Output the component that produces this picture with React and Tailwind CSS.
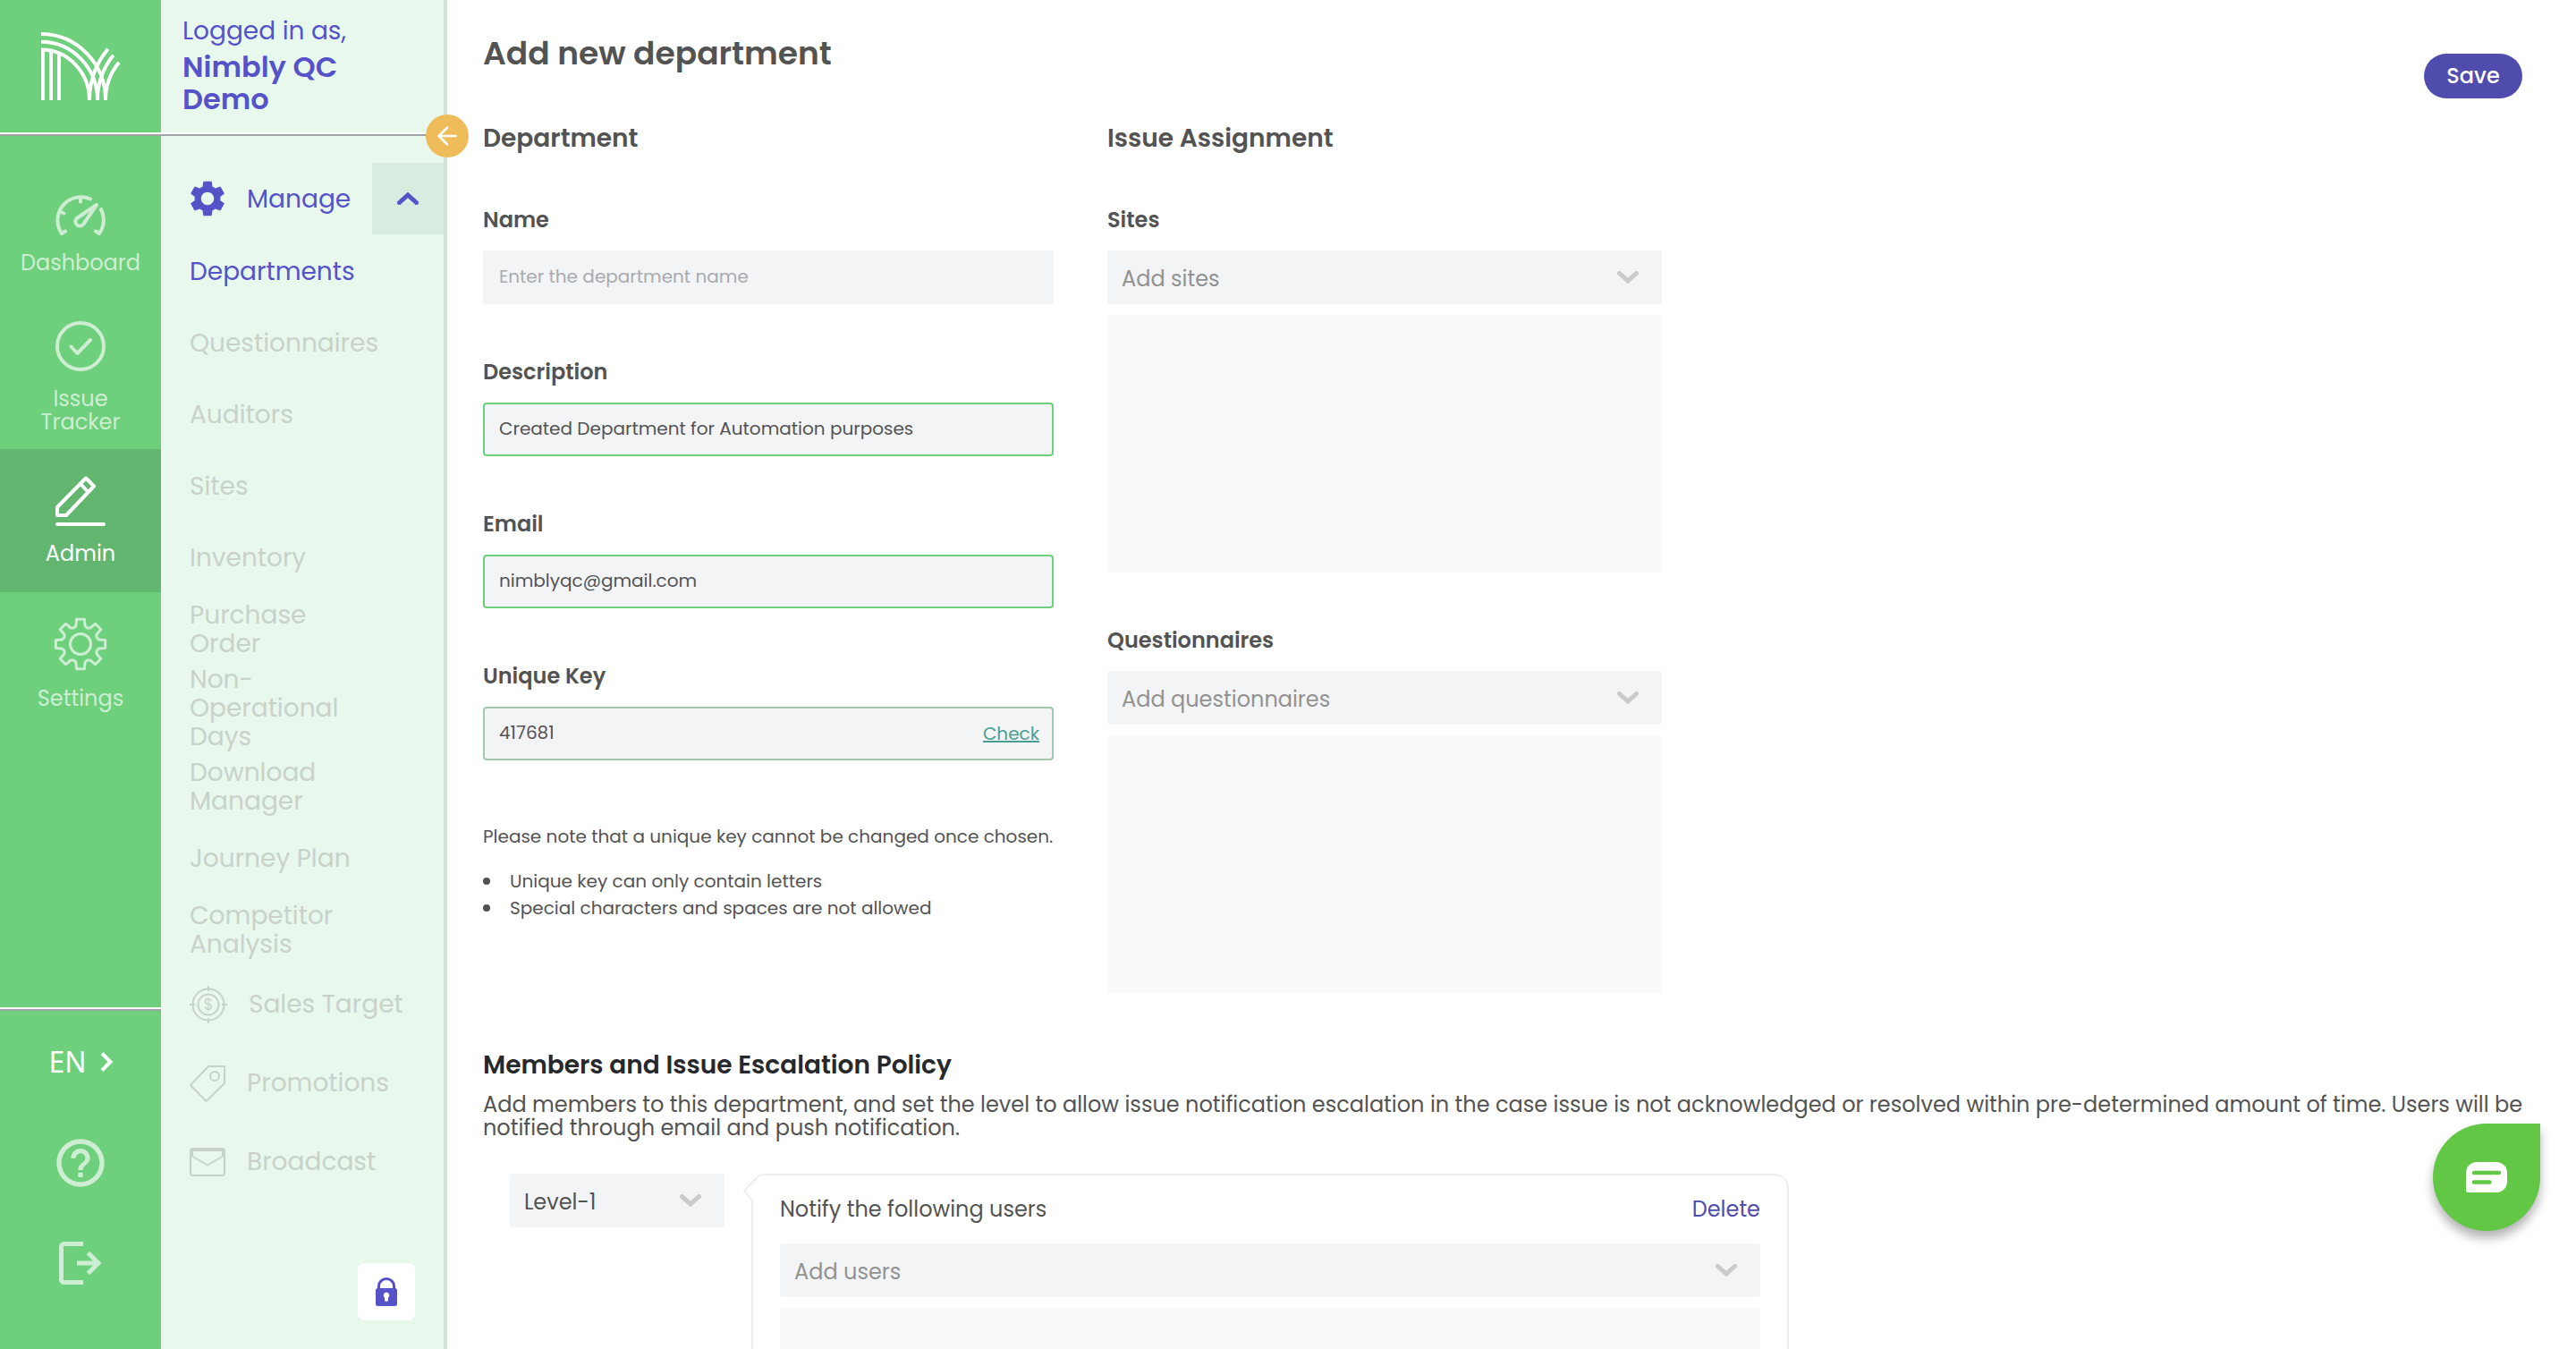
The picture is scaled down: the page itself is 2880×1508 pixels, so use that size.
import React from "react";
import { MdSettings, MdHelpOutline } from "react-icons/md";
import { ArrowLeft } from "lucide-react";

function Logo() {
  return (
    <svg width="88" height="76" viewBox="0 0 88 76" fill="none" stroke="#fff" strokeWidth="4" aria-label="Nimbly">
      <path d="M2 76V19M11 76V20M20 76V22" />
      <path d="M0 2A72 74 0 0 1 72 76M0 10.8A63 65.2 0 0 1 63 76M0 19.6A54 56.4 0 0 1 54 76" />
      <path d="M54 76A89.6 89.6 0 0 1 74.7 18.7M63 76A79.3 79.3 0 0 1 80.7 25.7M72 76A66 66 0 0 1 87 33.7" />
    </svg>
  );
}

function DashboardIcon() {
  return (
    <svg width="56" height="45" viewBox="0 0 56 45" fill="none" stroke="currentColor" strokeWidth="4" strokeLinecap="round" strokeLinejoin="round">
      <path d="M11 40.5L7 43A26 26 0 0 1 39 4.5M51 16A26 26 0 0 1 49 43L45 40.5M28 3V7.5M5 18.5L9.5 20.5" />
      <path d="M46 11L32 31.5A5 5 0 1 1 24.5 25.5Z" />
    </svg>
  );
}

function IssueIcon() {
  return (
    <svg width="56" height="56" viewBox="0 0 56 56" fill="none" stroke="currentColor" strokeWidth="4" strokeLinecap="round" strokeLinejoin="round">
      <circle cx="28" cy="28" r="26" />
      <path d="M17.5 28.5L24.5 36L39 21" />
    </svg>
  );
}

function PencilIcon() {
  return (
    <svg width="56" height="56" viewBox="0 0 56 56" fill="none" stroke="currentColor" strokeWidth="4" strokeLinejoin="round" strokeLinecap="round">
      <path d="M2 54H54M2 44V35L34 2.5L43 11.5L12 44ZM28 9L36.5 18" />
    </svg>
  );
}

const gearPath = (() => {
  const at = (deg, r) => {
    const a = (deg * Math.PI) / 180;
    return `${(30 + r * Math.cos(a)).toFixed(1)} ${(30 + r * Math.sin(a)).toFixed(1)}`;
  };
  const points = [];
  for (let i = 0; i < 8; i++) {
    const c = i * 45 - 90;
    points.push(at(c - 14, 21), at(c - 9, 28), at(c + 9, 28), at(c + 14, 21), at(c + 22.5, 19.5));
  }
  return `M${points.join("L")}Z`;
})();

function GearOutlineIcon() {
  return (
    <svg width="60" height="60" viewBox="0 0 60 60" fill="none" stroke="currentColor" strokeWidth="3" strokeLinejoin="round">
      <path d={gearPath} />
      <circle cx="30" cy="30" r="11.5" />
    </svg>
  );
}

function LogoutIcon() {
  return (
    <svg width="48" height="48" viewBox="0 0 48 48" fill="none" stroke="currentColor" strokeWidth="5">
      <path d="M27 2.5H5.5A3 3 0 0 0 2.5 5.5V42.5A3 3 0 0 0 5.5 45.5H27" />
      <path d="M20 24H42M32.5 12.5L44 24L32.5 35.5" />
    </svg>
  );
}

function TargetIcon() {
  return (
    <svg width="42" height="42" viewBox="0 0 42 42" fill="none" stroke="currentColor" strokeWidth="2">
      <circle cx="21" cy="21" r="17.5" />
      <circle cx="21" cy="21" r="11.5" />
      <path d="M21 0V6M21 36V42M0 21H6M36 21H42" />
      <text x="21" y="27" textAnchor="middle" fontSize="17" fill="currentColor" stroke="none" fontFamily="Poppins, Inter, sans-serif">$</text>
    </svg>
  );
}

function TagIcon() {
  return (
    <svg width="40" height="41" viewBox="0 0 40 41" fill="none" stroke="currentColor" strokeWidth="2" strokeLinejoin="round">
      <path d="M21 1H39V20L18.5 40L1 22Z" />
      <circle cx="28" cy="12" r="5" />
    </svg>
  );
}

function MailIcon() {
  return (
    <svg width="40" height="32" viewBox="0 0 40 32" fill="none" stroke="currentColor" strokeWidth="2" strokeLinejoin="round">
      <rect x="1" y="1" width="38" height="30" rx="3" />
      <path d="M3 9V3H37V9" />
      <path d="M2 9L20 19.5L38 9" />
    </svg>
  );
}

function LockIcon() {
  return (
    <svg width="24" height="32" viewBox="0 0 24 32">
      <path d="M3.5 14V9.5A8.5 8 0 0 1 20.5 9.5V14" fill="none" stroke="#5653c9" strokeWidth="3" />
      <rect y="12" width="24" height="20" rx="2.5" fill="#5653c9" />
      <path d="M12 16.5a3.5 3.5 0 0 1 2 6.2V25a2 2 0 0 1-4 0v-2.3a3.5 3.5 0 0 1 2-6.2z" fill="#fff" />
    </svg>
  );
}

function Chevron({ className }) {
  return (
    <svg className={className} width="24" height="14" viewBox="0 0 24 14" fill="none" stroke="currentColor" strokeWidth="5" strokeLinecap="round">
      <path d="M2.5 2.5L12 11L21.5 2.5" />
    </svg>
  );
}

const railItems = [
  { label: "Dashboard", icon: <DashboardIcon /> },
  { label: "Issue Tracker", icon: <IssueIcon /> },
  { label: "Admin", icon: <PencilIcon />, active: true },
  { label: "Settings", icon: <GearOutlineIcon /> },
];

const manageItems = [
  { label: "Departments", active: true },
  { label: "Questionnaires" },
  { label: "Auditors" },
  { label: "Sites" },
  { label: "Inventory" },
  { label: "Purchase Order" },
  { label: "Non-Operational Days" },
  { label: "Download Manager" },
  { label: "Journey Plan" },
  { label: "Competitor Analysis" },
];

const sectionItems = [
  { label: "Sales Target", icon: <TargetIcon /> },
  { label: "Promotions", icon: <TagIcon /> },
  { label: "Broadcast", icon: <MailIcon /> },
];

function Divider() {
  return <div className="h-1 shrink-0 border-b-2 border-[#9fa3a6] bg-white" />;
}

function Rail() {
  return (
    <nav className="flex w-[180px] shrink-0 flex-col bg-[#6ecf7c] text-2xl leading-[26px]">
      <a href="#home" className="flex h-[148px] shrink-0 items-center justify-center">
        <Logo />
      </a>
      <Divider />
      <div className="flex flex-col pt-[30px]">
        {railItems.map((item) => (
          <a
            key={item.label}
            href={`#${item.label}`}
            className={
              "flex h-40 flex-col items-center justify-center gap-[18px] px-5 text-center " +
              (item.active ? "bg-[#63b670] text-white" : "text-[#cdeed2]")
            }
          >
            {item.icon}
            <span>{item.label}</span>
          </a>
        ))}
      </div>
      <div className="mt-auto flex flex-col pb-10 text-[#cdeed2]">
        <Divider />
        <button type="button" className="flex h-[114px] items-center justify-center gap-[15px] font-['Noto_Sans',sans-serif] text-[32px] text-white">
          EN
          <svg width="14" height="22" viewBox="0 0 14 22" fill="none" stroke="currentColor" strokeWidth="4">
            <path d="M2 1.5L11.5 11L2 20.5" />
          </svg>
        </button>
        <button type="button" aria-label="Help" className="flex h-28 items-center justify-center">
          <MdHelpOutline size={64} />
        </button>
        <button type="button" aria-label="Log out" className="flex h-28 items-center justify-center">
          <LogoutIcon />
        </button>
      </div>
    </nav>
  );
}

function Sidebar() {
  return (
    <aside className="relative z-10 flex w-80 shrink-0 flex-col border-r-4 border-[#d3e3d8] bg-[#e8f8ed] text-[28px] leading-8 text-[#c8d2ca]">
      <div className="flex h-[148px] shrink-0 flex-col pt-[17px] pr-12 pl-6 text-[#5653c9]">
        <span className="leading-9">Logged in as,</span>
        <strong className="mt-1 text-[32px] leading-9 font-semibold">Nimbly QC Demo</strong>
      </div>
      <Divider />
      <button
        type="button"
        aria-label="Collapse sidebar"
        className="absolute top-32 -right-7 flex size-12 items-center justify-center rounded-full bg-[#eebc59] text-white"
      >
        <ArrowLeft size={32} />
      </button>
      <div className="mt-[30px] flex h-20 shrink-0 items-center justify-between pl-7 text-[#5653c9]">
        <a href="#manage" className="flex items-center gap-5">
          <MdSettings size={48} />
          <span className="pt-0.5">Manage</span>
        </a>
        <button type="button" aria-label="Collapse Manage" className="flex h-20 w-20 items-center justify-center bg-[#d8ecdf]">
          <Chevron className="rotate-180" />
        </button>
      </div>
      <ul className="pl-8">
        {manageItems.map((item) => (
          <li key={item.label} className="flex min-h-20 w-[212px] items-center">
            <a href={`#${item.label}`} className={item.active ? "pt-0.5 -mb-0.5 text-[#5653c9]" : "pt-0.5 -mb-0.5"}>
              {item.label}
            </a>
          </li>
        ))}
      </ul>
      <ul className="pl-8">
        {sectionItems.map((item) => (
          <li key={item.label} className="flex h-[88px] items-center">
            <a href={`#${item.label}`} className="flex items-center gap-6 pt-0.5">
              {item.icon}
              {item.label}
            </a>
          </li>
        ))}
      </ul>
      <button
        type="button"
        aria-label="Lock sidebar"
        className="mt-auto mr-8 mb-8 flex size-16 shrink-0 items-center justify-center self-end rounded-lg bg-white"
      >
        <LockIcon />
      </button>
    </aside>
  );
}

function TextField({ id, label, borderClass, action, ...inputProps }) {
  return (
    <div className="flex flex-col gap-[22px]">
      <label htmlFor={id} className="text-2xl leading-6 font-semibold">
        {label}
      </label>
      <div className={"flex h-[60px] items-center rounded border-2 bg-[#f3f4f6] pr-3.5 pl-4 text-xl " + borderClass}>
        <input
          id={id}
          className="h-full min-w-0 flex-1 bg-transparent pb-0.5 outline-none placeholder:text-[#a9aaaf]"
          {...inputProps}
        />
        {action}
      </div>
    </div>
  );
}

function SelectBox({ id, placeholder, muted = true, ...rest }) {
  return (
    <div className="relative flex h-[60px] items-center rounded bg-[#f3f4f6]">
      <select
        id={id}
        className={
          "h-full w-full appearance-none bg-transparent px-4 pt-1 text-2xl outline-none " +
          (muted ? "text-[#929292]" : "text-[#535353]")
        }
        {...rest}
      >
        <option>{placeholder}</option>
      </select>
      <Chevron className="pointer-events-none absolute right-[26px] text-[#cacaca]" />
    </div>
  );
}

function PickList({ id, label, placeholder }) {
  return (
    <div className="flex flex-col">
      <label htmlFor={id} className="mb-[22px] text-2xl leading-6 font-semibold">
        {label}
      </label>
      <SelectBox id={id} placeholder={placeholder} />
      <div className="mt-3 h-72 rounded bg-[#fafafa]" />
    </div>
  );
}

function EscalationLevel() {
  return (
    <div className="mt-[38px] flex items-start gap-[30px] pl-[30px]">
      <div className="w-60 shrink-0">
        <SelectBox id="level" placeholder="Level-1" muted={false} aria-label="Escalation level" />
      </div>
      <div className="relative w-full max-w-[1160px] rounded-2xl border-2 border-[#eeeeee] px-[30px] pt-[26px] pb-7">
        <svg className="absolute -top-0.5 -left-3" width="24" height="34" viewBox="0 0 24 34">
          <path d="M24 0H8V34H14V6L24 4Z" fill="#fff" />
          <path d="M24 1Q19 1 16.5 4L2 19L11 30V34" fill="#fff" stroke="#eeeeee" strokeWidth="2" />
          <path d="M12 29V10H20V34H12Z" fill="#fff" />
        </svg>
        <div className="flex items-center justify-between text-2xl leading-6">
          <label htmlFor="users">Notify the following users</label>
          <button type="button" className="text-[#4f4cad]">
            Delete
          </button>
        </div>
        <div className="mt-[26px]">
          <SelectBox id="users" placeholder="Add users" />
        </div>
        <div className="mt-3 h-72 rounded bg-[#fafafa]" />
      </div>
    </div>
  );
}

export default function App() {
  return (
    <div className="flex h-screen overflow-hidden bg-white font-['Poppins','Inter',sans-serif] text-[#535353]">
      <Rail />
      <Sidebar />
      <main className="min-w-0 flex-1 overflow-y-auto pt-10 pr-14 pb-10 pl-10 [scrollbar-width:none]">
        <header className="flex items-start justify-between pr-1">
          <h1 className="text-4xl leading-10 font-semibold">Add new department</h1>
          <button type="submit" form="department-form" className="mt-5 h-[50px] w-[110px] rounded-full bg-[#4f4cad] text-2xl font-medium text-white">
            Save
          </button>
        </header>
        <form id="department-form" className="mt-[30px]">
          <div className="flex flex-wrap gap-[60px]">
            <section className="w-[638px]">
              <h2 className="mb-16 text-[28px] leading-[30px] font-semibold">Department</h2>
              <div className="flex flex-col gap-16">
                <TextField id="name" label="Name" placeholder="Enter the department name" borderClass="border-transparent" />
                <TextField
                  id="description"
                  label="Description"
                  defaultValue="Created Department for Automation purposes"
                  borderClass="border-[#6ecf7c]"
                />
                <TextField id="email" label="Email" type="email" defaultValue="nimblyqc@gmail.com" borderClass="border-[#6ecf7c]" />
                <TextField
                  id="unique-key"
                  label="Unique Key"
                  defaultValue="417681"
                  borderClass="border-[#a5c7b0]"
                  action={
                    <button type="button" className="text-[#489e93] underline decoration-2">
                      Check
                    </button>
                  }
                />
              </div>
              <div className="mt-[70px] text-xl leading-[30px]">
                <p className="whitespace-nowrap">Please note that a unique key cannot be changed once chosen.</p>
                <ul className="mt-5">
                  {["Unique key can only contain letters", "Special characters and spaces are not allowed"].map((rule) => (
                    <li key={rule} className="flex items-center gap-[22px]">
                      <span className="size-2 rounded-full bg-[#535353]" />
                      {rule}
                    </li>
                  ))}
                </ul>
              </div>
            </section>
            <section className="w-[620px]">
              <h2 className="mb-16 text-[28px] leading-[30px] font-semibold">Issue Assignment</h2>
              <div className="flex flex-col gap-16">
                <PickList id="sites" label="Sites" placeholder="Add sites" />
                <PickList id="questionnaires" label="Questionnaires" placeholder="Add questionnaires" />
              </div>
            </section>
          </div>
          <section className="mt-[66px]">
            <h2 className="text-[28px] leading-[30px] font-semibold text-[#26282c]">Members and Issue Escalation Policy</h2>
            <p className="mt-4 text-2xl leading-[26px]">
              Add members to this department, and set the level to allow issue notification escalation in the case issue is not
              acknowledged or resolved within pre-determined amount of time. Users will be notified through email and push
              notification.
            </p>
            <EscalationLevel />
          </section>
        </form>
      </main>
      <button
        type="button"
        aria-label="Open chat"
        className="fixed right-10 bottom-[132px] z-20 flex size-[120px] items-center justify-center rounded-full rounded-tr-[14px] bg-[#62c744] shadow-[0_8px_12px_rgba(0,0,0,0.3)]"
      >
        <svg width="46" height="34" viewBox="0 0 46 34" fill="none">
          <path d="M12 0H34A12 12 0 0 1 46 12V22A12 12 0 0 1 34 34H2A2 2 0 0 1 0 32V12A12 12 0 0 1 12 0Z" fill="#fff" />
          <path d="M9 12H37M9 22.5H26.5" stroke="#62c744" strokeWidth="4.4" strokeLinecap="round" />
        </svg>
      </button>
    </div>
  );
}
